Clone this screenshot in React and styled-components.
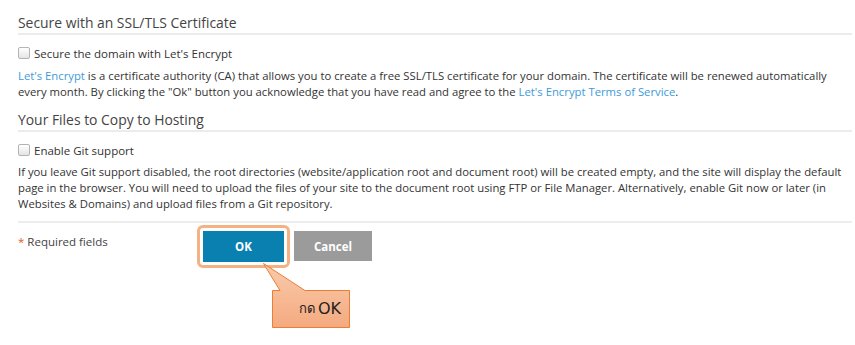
import React from "react";
import styled, { createGlobalStyle } from "styled-components";

const GlobalStyle = createGlobalStyle`
  body {
    margin: 0;
    background: #fff;
    font-family: "Open Sans", "Noto Sans", sans-serif;
    color: #333;
  }
`;

const Page = styled.div`
  position: relative;
  width: 855px;
  height: 345px;
  box-sizing: border-box;
  padding: 13px 3px 0 18px;
  overflow: hidden;
`;

const SectionTitle = styled.h3`
  margin: ${(p) => (p.first ? "0" : "10px")} 0 0;
  font-size: 13.9px;
  font-weight: 400;
  line-height: 20px;
  color: #444;
  border-bottom: 2px solid #ececec;
`;

const CheckRow = styled.label`
  display: flex;
  align-items: center;
  gap: 4px;
  margin-top: 10px;
  height: 16px;
  font-size: 11.5px;
  color: #333;
`;

const Box = styled.span`
  width: 10px;
  height: 10px;
  border: 1px solid #b3b3b3;
  border-radius: 2px;
  background: linear-gradient(#ffffff, #e4e4e4);
`;

const Para = styled.p`
  margin: ${(p) => p.top || 7}px 0 0;
  font-size: 11.3px;
  line-height: 16px;
  color: #333;
  a {
    color: #3d9ad8;
    text-decoration: none;
  }
`;

const Divider = styled.div`
  margin-top: 9px;
  border-top: 2px solid #ededed;
`;

const Footer = styled.div`
  display: flex;
  align-items: flex-start;
  margin-top: 2px;
`;

const Required = styled.div`
  width: 179px;
  padding-top: 9px;
  font-size: 11.5px;
  line-height: 16px;
  color: #444;
  span {
    color: #e0611b;
  }
`;

const Highlight = styled.div`
  padding: 3px;
  border: 3px solid #f4b183;
  border-radius: 6px;
`;

const Button = styled.button`
  display: block;
  width: ${(p) => (p.primary ? 81 : 78)}px;
  height: ${(p) => (p.primary ? 31 : 30)}px;
  margin: ${(p) => (p.primary ? 0 : "6px 0 0 4px")};
  border: none;
  background: ${(p) => (p.primary ? "#0a80b0" : "#9b9b9b")};
  color: #fff;
  font-family: "Open Sans", sans-serif;
  font-size: 11.5px;
  font-weight: 700;
  cursor: pointer;
`;

const Callout = styled.div`
  position: absolute;
  left: 262px;
  top: 262px;
  width: 90px;
  height: 68px;
`;

const CalloutText = styled.div`
  position: absolute;
  left: 10px;
  top: 28px;
  width: 77px;
  height: 37px;
  display: flex;
  align-items: center;
  padding-left: 27px;
  box-sizing: border-box;
  font-family: "DejaVu Sans", "Noto Sans", sans-serif;
  font-size: 16px;
  color: #222;
  white-space: nowrap;
  b {
    font-weight: 400;
    font-size: 13px;
    margin-right: 3px;
  }
`;

export default function App() {
  return (
    <>
      <GlobalStyle />
      <Page>
        <SectionTitle first>Secure with an SSL/TLS Certificate</SectionTitle>
        <CheckRow>
          <Box />
          Secure the domain with Let's Encrypt
        </CheckRow>
        <Para>
          <a href="#le">Let's Encrypt</a> is a certificate authority (CA) that
          allows you to create a free SSL/TLS certificate for your domain. The
          certificate will be renewed automatically every month. By clicking the
          "Ok" button you acknowledge that you have read and agree to the{" "}
          <a href="#tos">Let's Encrypt Terms of Service</a>.
        </Para>

        <SectionTitle>Your Files to Copy to Hosting</SectionTitle>
        <CheckRow>
          <Box />
          Enable Git support
        </CheckRow>
        <Para top={6}>
          If you leave Git support disabled, the root directories
          (website/application root and document root) will be created empty,
          and the site will display the default page in the browser. You will
          need to upload the files of your site to the document root using FTP
          or File Manager. Alternatively, enable Git now or later (in Websites
          &amp; Domains) and upload files from a Git repository.
        </Para>

        <Divider />
        <Footer>
          <Required>
            <span>*</span> Required fields
          </Required>
          <Highlight>
            <Button primary>OK</Button>
          </Highlight>
          <Button>Cancel</Button>
        </Footer>

        <Callout>
          <svg width="90" height="68" viewBox="0 0 90 68">
            <defs>
              <linearGradient id="cg" x1="0" y1="0" x2="0" y2="1">
                <stop offset="0" stopColor="#f9cbab" />
                <stop offset="1" stopColor="#f4aa80" />
              </linearGradient>
            </defs>
            <path
              d="M1.5 1.5 L18 28.5 H10.5 V65.5 H87.5 V28.5 H43 Z"
              fill="url(#cg)"
              stroke="#ed7d31"
              strokeWidth="1"
            />
          </svg>
          <CalloutText>
            <b>กด</b>OK
          </CalloutText>
        </Callout>
      </Page>
    </>
  );
}
